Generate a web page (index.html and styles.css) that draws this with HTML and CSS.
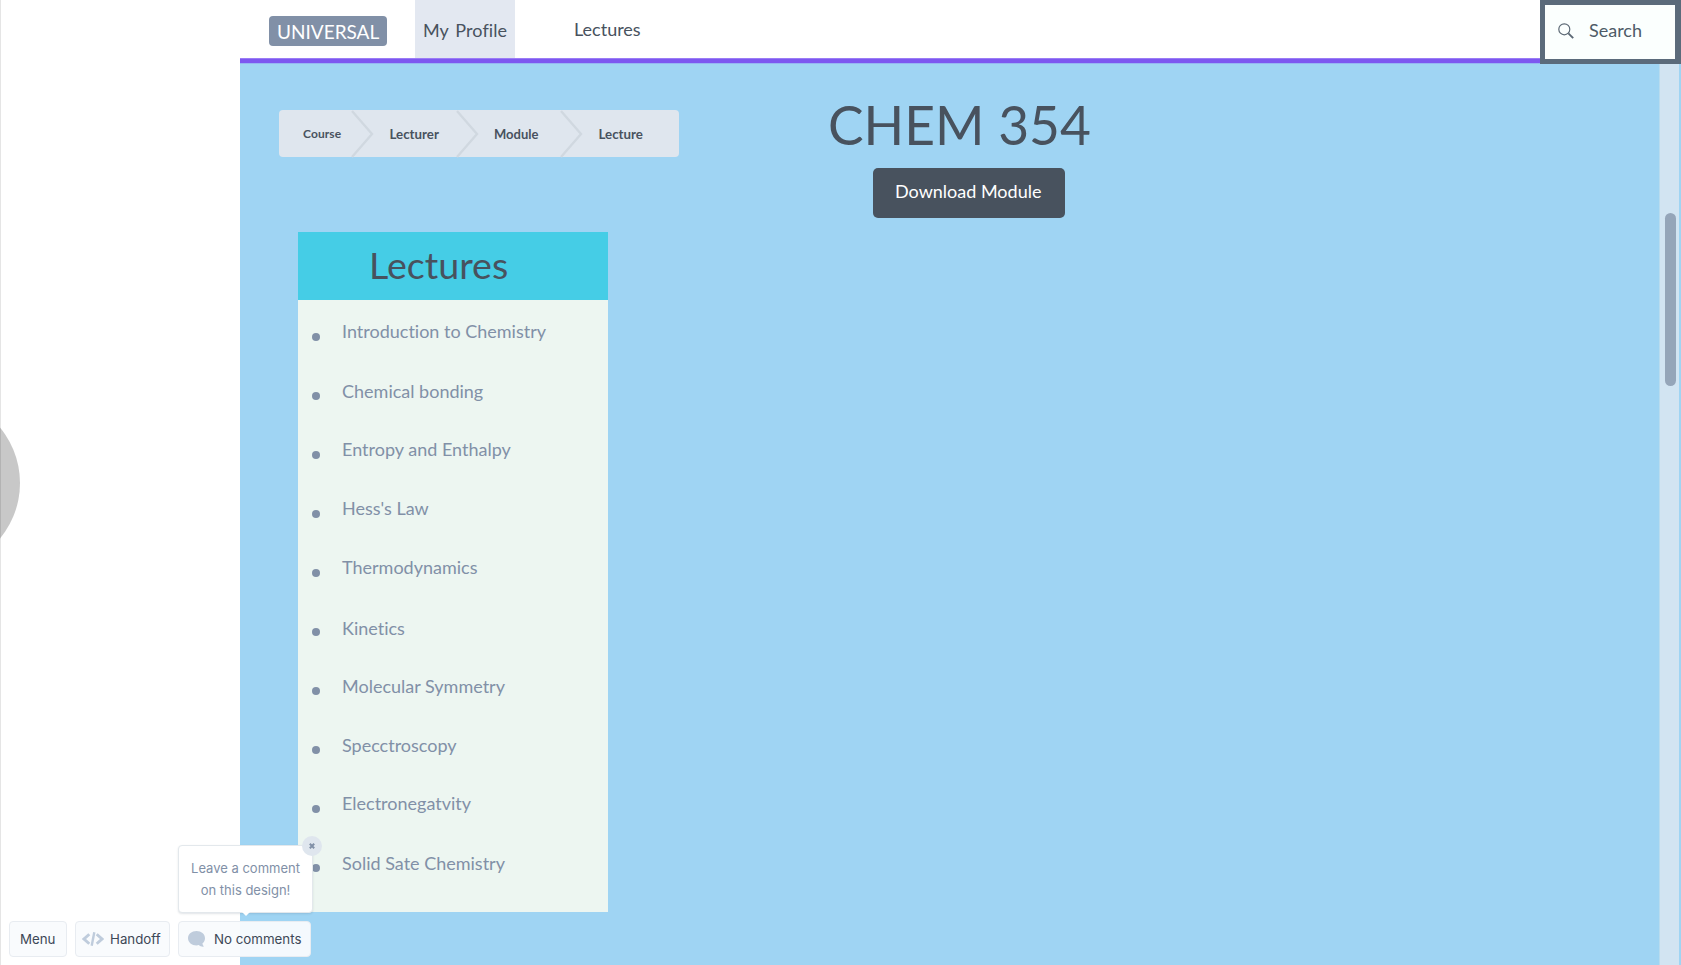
FILE: index.html
```html
<!DOCTYPE html>
<html lang="en">
<head>
<meta charset="utf-8">
<title>CHEM 354 - Lectures</title>
<link rel="stylesheet" href="styles.css">
</head>
<body>
<div class="viewer">
  <aside class="gutter"><div class="prev-handle"></div></aside>
  <div class="screen">
    <header class="topbar">
      <a class="logo">UNIVERSAL</a>
      <nav class="nav">
        <a class="nav-tab">My Profile</a>
        <a class="nav-link">Lectures</a>
      </nav>
      <div class="search">
        <svg class="search-icon" viewBox="0 0 16 16"><circle cx="6.3" cy="6.3" r="5.5" fill="none" stroke="#5b6874" stroke-width="1.2"/><path d="M10.4 10.4L15.2 15.2" stroke="#5b6874" stroke-width="1.9"/></svg>
        <span>Search</span>
      </div>
    </header>
    <main class="content">
      <section class="left">
        <nav class="crumbs">
          <span class="crumb crumb-first">Course</span>
          <svg class="chevron" viewBox="0 0 22 47"><path d="M1 1L21 24L1 47"/></svg>
          <span class="crumb">Lecturer</span>
          <svg class="chevron" viewBox="0 0 22 47"><path d="M1 1L21 24L1 47"/></svg>
          <span class="crumb crumb-module">Module</span>
          <svg class="chevron" viewBox="0 0 22 47"><path d="M1 1L21 24L1 47"/></svg>
          <span class="crumb">Lecture</span>
        </nav>
        <div class="panel">
          <h2 class="panel-title">Lectures</h2>
          <ul class="lectures">
            <li>Introduction to Chemistry</li>
            <li class="drop-1">Chemical bonding</li>
            <li>Entropy and Enthalpy</li>
            <li>Hess's Law</li>
            <li>Thermodynamics</li>
            <li class="drop-2">Kinetics</li>
            <li class="drop-1">Molecular Symmetry</li>
            <li class="drop-1">Specctroscopy</li>
            <li>Electronegatvity</li>
            <li class="drop-1">Solid Sate Chemistry</li>
          </ul>
        </div>
      </section>
      <section class="right">
        <h1 class="title">CHEM 354</h1>
        <a class="download">Download Module</a>
      </section>
      <div class="rail"><div class="thumb"></div></div>
    </main>
  </div>
  <div class="tools">
    <a class="tool tool-menu">Menu</a>
    <a class="tool tool-handoff">
      <svg class="code-icon" viewBox="0 0 22 14"><path d="M7.3 2.2L2 7L7.3 11.8M14.7 2.2L20 7L14.7 11.8" stroke-width="2.9"/><path d="M12.3 .3L9.7 13.7" stroke-width="2.4"/></svg>
      <span>Handoff</span>
    </a>
    <a class="tool tool-comments">
      <svg class="bubble-icon" viewBox="0 0 17 16"><path d="M8.5 0C13.2 0 17 3 17 7.2C17 9.3 16 11.2 14.4 12.5C14.6 13.8 15.2 14.8 16 15.6C13.8 15.9 12 15.2 10.8 14.1C10 14.3 9.3 14.4 8.5 14.4C3.8 14.4 0 11.3 0 7.2C0 3 3.8 0 8.5 0Z" fill="#bfccdc"/></svg>
      <span>No comments</span>
    </a>
    <div class="tip">
      Leave a comment<br>on this design!
      <div class="tip-close"><svg class="x-icon" viewBox="0 0 6 6"><path d="M.8 .8L5.2 5.2M5.2 .8L.8 5.2" stroke="#8190a7" stroke-width="2"/></svg></div>
    </div>
  </div>
</div>
</body>
</html>
```

FILE: styles.css
```css
* { box-sizing: border-box; }
body { margin: 0; font-family: Lato, sans-serif; font-variant-ligatures: none; color: #48525e; }
h1, h2, ul { margin: 0; padding: 0; font-weight: 400; }

.viewer { position: relative; display: flex; width: 100%; height: 965px; overflow: hidden; background: #fff; }
.gutter { position: relative; width: 240px; flex: none; overflow: hidden; }
.gutter::after { content: ""; position: absolute; inset: 0 auto 0 0; width: 1px; background: rgba(0, 0, 0, .1); }
.prev-handle { position: absolute; left: -154px; top: 396px; width: 174px; height: 174px; border-radius: 50%; background: #c8c8c8; }
.screen { flex: 1; display: flex; flex-direction: column; }

.topbar { height: 64px; flex: none; display: flex; align-items: flex-start; font-size: 18px; line-height: 22px;
  background: linear-gradient(#fff 58px, #9b7cf6 58px, #9b7cf6 59px, #7d57f0 59px, #7d57f0 63px, #96b5f2 63px); }
.logo { width: 118px; height: 30px; margin: 16px 0 0 29px; padding: 4px 0 0 8px; border-radius: 4px; background: #8190a7; color: #fff; font-size: 19px; line-height: 23px; }
.nav { display: flex; margin-left: 28px; }
.nav-tab { width: 100px; height: 58px; padding: 19px 0 0 8px; background: #e3e8f1; word-spacing: 2px; letter-spacing: .1px; white-space: nowrap; }
.nav-link { margin-left: 59px; padding-top: 18px; }
.search { width: 141px; height: 64px; margin-left: auto; display: flex; padding: 14px 0 0 13px; border: 5px solid #5b6b7b; border-right-width: 6px; background: #fbfffe; color: #4e5b67; }
.search-icon { width: 16px; height: 16px; margin: 4px 15px 0 0; }

.content { flex: 1; display: flex; background: #9fd4f3; }
.left { width: 588px; padding: 46px 0 0 39px; }
.crumbs { display: flex; width: 400px; height: 47px; border-radius: 4px; background: #dfe6ee; font-size: 13.3px; font-weight: 700; line-height: 16px; }
.crumb { width: 83px; padding: 16px 0 0 16.5px; }
.crumb-first { width: 72px; padding-left: 24px; font-size: 12px; line-height: 15px; letter-spacing: .1px; }
.crumb-module { width: 82px; padding-left: 16px; font-size: 13px; }
.chevron { width: 22px; height: 47px; flex: none; overflow: visible; fill: none; stroke: #d0d8e0; stroke-width: 2.3; }

.panel { width: 310px; height: 680px; margin: 75px 0 0 19px; background: #edf6f1; }
.panel-title { height: 68px; padding: 10px 0 0 71px; background: #45cde6; font-size: 37.6px; line-height: 45px; }
.lectures { list-style: none; padding: 20px 0 0 14px; color: #8190a7; font-size: 18px; line-height: 22px; }
.lectures li { display: flex; height: 59px; }
.lectures li::before { content: ""; width: 8px; height: 8px; margin: 13px 22px 0 0; border-radius: 50%; background: #8190a7; }
.lectures .drop-1 { padding-top: 1px; }
.lectures .drop-1::before { margin-top: 12px; }
.lectures .drop-2 { padding-top: 2px; }
.lectures .drop-2::before { margin-top: 11px; }

.right { flex: 1; padding-top: 28px; }
.title { font-size: 53.3px; line-height: 64px; }
.download { display: block; width: 192px; height: 50px; margin: 12px 0 0 45px; padding: 12px 0 0 22px; border-radius: 5px; background: #48525e; color: #fff; font-size: 18px; line-height: 22px; white-space: nowrap; }
.rail { width: 20px; margin-right: 2px; padding: 149px 0 0 5px; border-left: 1px solid #b9dcef; background: #d2e4f2; }
.thumb { width: 11px; height: 173px; border-radius: 6px; background: #95a5b9; }

.tools { position: absolute; left: 9px; top: 921px; display: flex; gap: 8px; color: #3d4857; font: 13.3px/20px Inter, sans-serif; }
.tool { display: flex; height: 36px; padding-top: 7px; border: 1px solid #e8ecf1; border-radius: 4px; background: rgba(249, 251, 253, .95); white-space: nowrap; }
.tool-menu { width: 58px; padding-left: 10px; }
.tool-handoff { width: 95px; padding-left: 6px; }
.tool-comments { width: 133px; padding-left: 9px; }
.code-icon { width: 22px; height: 14px; margin: 3px 6px 0 0; fill: none; stroke: #bfccdc; }
.bubble-icon { width: 17px; height: 16px; margin: 2px 9px 0 0; }
.tip { position: absolute; left: 169px; top: -76px; width: 135px; height: 68px; padding-top: 11px; border: 1px solid #e3e8ec; border-radius: 4px; background: #fff; box-shadow: 0 1px 2px rgba(60, 80, 100, .15); color: #8190a7; font-size: 13px; line-height: 22px; text-align: center; white-space: nowrap; }
.tip::after { content: ""; position: absolute; left: 63px; top: 66px; border: 4px solid transparent; border-top-color: #fff; border-bottom: 0; }
.tip-close { position: absolute; right: -10px; top: -10px; display: flex; align-items: center; justify-content: center; width: 20px; height: 20px; border-radius: 50%; background: #dfe6ee; }
.x-icon { width: 6px; height: 6px; }
```
